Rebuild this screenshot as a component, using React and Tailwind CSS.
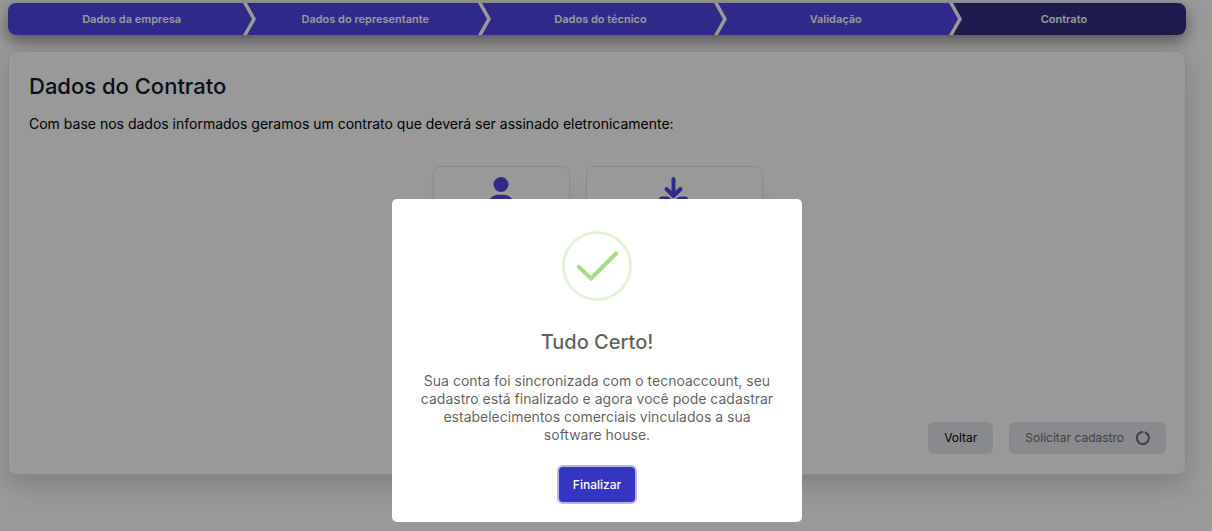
import { FaUser } from 'react-icons/fa6';

const steps = ['Dados da empresa', 'Dados do representante', 'Dados do técnico', 'Validação', 'Contrato'];

function Chevron() {
  return (
    <svg viewBox="0 0 13 32" className="h-8 w-[13px] shrink-0" aria-hidden="true">
      <path d="M0 0L9 16L0 32Z" fill="#4f46e5" />
      <path d="M0 0H4L13 16L4 32H0L9 16Z" fill="#fff" />
    </svg>
  );
}

function StepBar() {
  return (
    <ol className="flex overflow-hidden rounded-lg text-[11px] font-semibold text-white">
      {steps.map((label, i) => {
        const last = i === steps.length - 1;
        return (
          <li
            key={label}
            aria-current={last ? 'step' : undefined}
            className={`flex h-8 items-center ${last ? 'flex-[237] bg-[#312e81]' : 'flex-[235] bg-[#4f46e5]'}`}
          >
            {i > 0 && <Chevron />}
            <span className={`flex-1 text-center ${i === 0 ? 'pl-3' : last ? 'pr-5' : 'pr-1'}`}>{label}</span>
          </li>
        );
      })}
    </ol>
  );
}

function DownloadIcon() {
  return (
    <svg viewBox="0 0 30 30" className="size-[30px]" aria-hidden="true">
      <g stroke="#4f46e5" fill="none" strokeWidth="4" strokeLinecap="round" strokeLinejoin="round">
        <path d="M14.5 2V18" />
        <path d="M7.5 12L14.500 19L21.500 12" />
      </g>
      <path
        fill="#4f46e5"
        d="M3 19.500H8Q10 19.500 11 21L12 22.500A3.500 3.500 0 0 0 17 22.500L18 21Q19 19.500 21 19.500H26A3 3 0 0 1 29 22.500V26A3 3 0 0 1 26 29H3A3 3 0 0 1 0 26V22.500A3 3 0 0 1 3 19.500Z"
      />
    </svg>
  );
}

function Spinner() {
  return (
    <svg viewBox="0 0 14 14" className="size-3.5" fill="none" stroke="currentColor" strokeWidth="2" aria-hidden="true">
      <path d="M9.300 1.500A6 6 0 1 1 6.500 1" />
      <path d="M6.500 1A6 6 0 0 1 9.300 1.500" opacity=".35" />
    </svg>
  );
}

function SuccessDialog() {
  return (
    <div className="fixed inset-0 flex items-start justify-center overflow-hidden bg-black/40 pt-[199px] pr-[18px]">
      <div
        role="dialog"
        aria-modal="true"
        aria-labelledby="dialog-title"
        className="flex w-[410px] flex-col items-center rounded-[5px] bg-white px-7 pt-8 pb-5 text-center"
      >
        <svg viewBox="0 0 70 70" className="size-[70px]" fill="none" aria-hidden="true">
          <circle cx="35" cy="35" r="33.500" stroke="#e2f3d7" strokeWidth="3" />
          <path d="M17 36L29 47.500L54 22.500" stroke="#a5dc86" strokeWidth="4" strokeLinecap="round" strokeLinejoin="miter" />
        </svg>
        <h2 id="dialog-title" className="mt-[25px] text-xl leading-8 font-medium text-black/65">
          Tudo Certo!
        </h2>
        <p className="mt-3.5 text-sm leading-[18px] text-black/65">
          Sua conta foi sincronizada com o tecnoaccount, seu cadastro está finalizado e agora você pode cadastrar
          estabelecimentos comerciais vinculados a sua software house.
        </p>
        <button
          type="button"
          className="mt-[23px] h-[35px] rounded bg-[#3634c3] px-3.5 text-xs font-medium text-white ring-2 ring-[#b9b3ec]"
        >
          Finalizar
        </button>
      </div>
    </div>
  );
}

export default function App() {
  return (
    <div className="min-h-screen bg-white pt-[3px] pr-[26px] pb-14 pl-2 font-['Inter',sans-serif]">
      <nav aria-label="Etapas" className="rounded-lg shadow-[0_6px_16px_rgba(0,0,0,0.45)]">
        <StepBar />
      </nav>
      <main className="mt-4 rounded-lg border border-gray-200 bg-white p-5 pr-[19px] shadow-[0_10px_24px_rgba(0,0,0,0.17)]">
        <h1 className="text-[22px] leading-7 font-medium text-gray-900">Dados do Contrato</h1>
        <p className="mt-3.5 text-sm leading-5 text-black">
          Com base nos dados informados geramos um contrato que deverá ser assinado eletronicamente:
        </p>
        <div className="mt-8 flex justify-center gap-4">
          <button
            type="button"
            aria-label="Representante"
            className="flex h-24 w-[137px] justify-center rounded-lg border border-gray-200 bg-white pt-2.5 shadow-xl"
          >
            <FaUser className="size-[30px] text-[#4f46e5]" />
          </button>
          <button
            type="button"
            aria-label="Baixar contrato"
            className="flex h-24 w-[177px] justify-center rounded-lg border border-gray-200 bg-white pt-2.5 shadow-xl"
          >
            <DownloadIcon />
          </button>
        </div>
        <div className="mt-40 flex justify-end gap-4 text-xs">
          <button type="button" className="h-8 rounded-md bg-[#e5e7eb] px-4 text-black">
            Voltar
          </button>
          <button
            type="button"
            disabled
            className="flex h-8 items-center gap-3 rounded-md bg-[#e5e7eb] px-4 text-[#6b6b6b]"
          >
            Solicitar cadastro
            <Spinner />
          </button>
        </div>
      </main>
      <SuccessDialog />
    </div>
  );
}
